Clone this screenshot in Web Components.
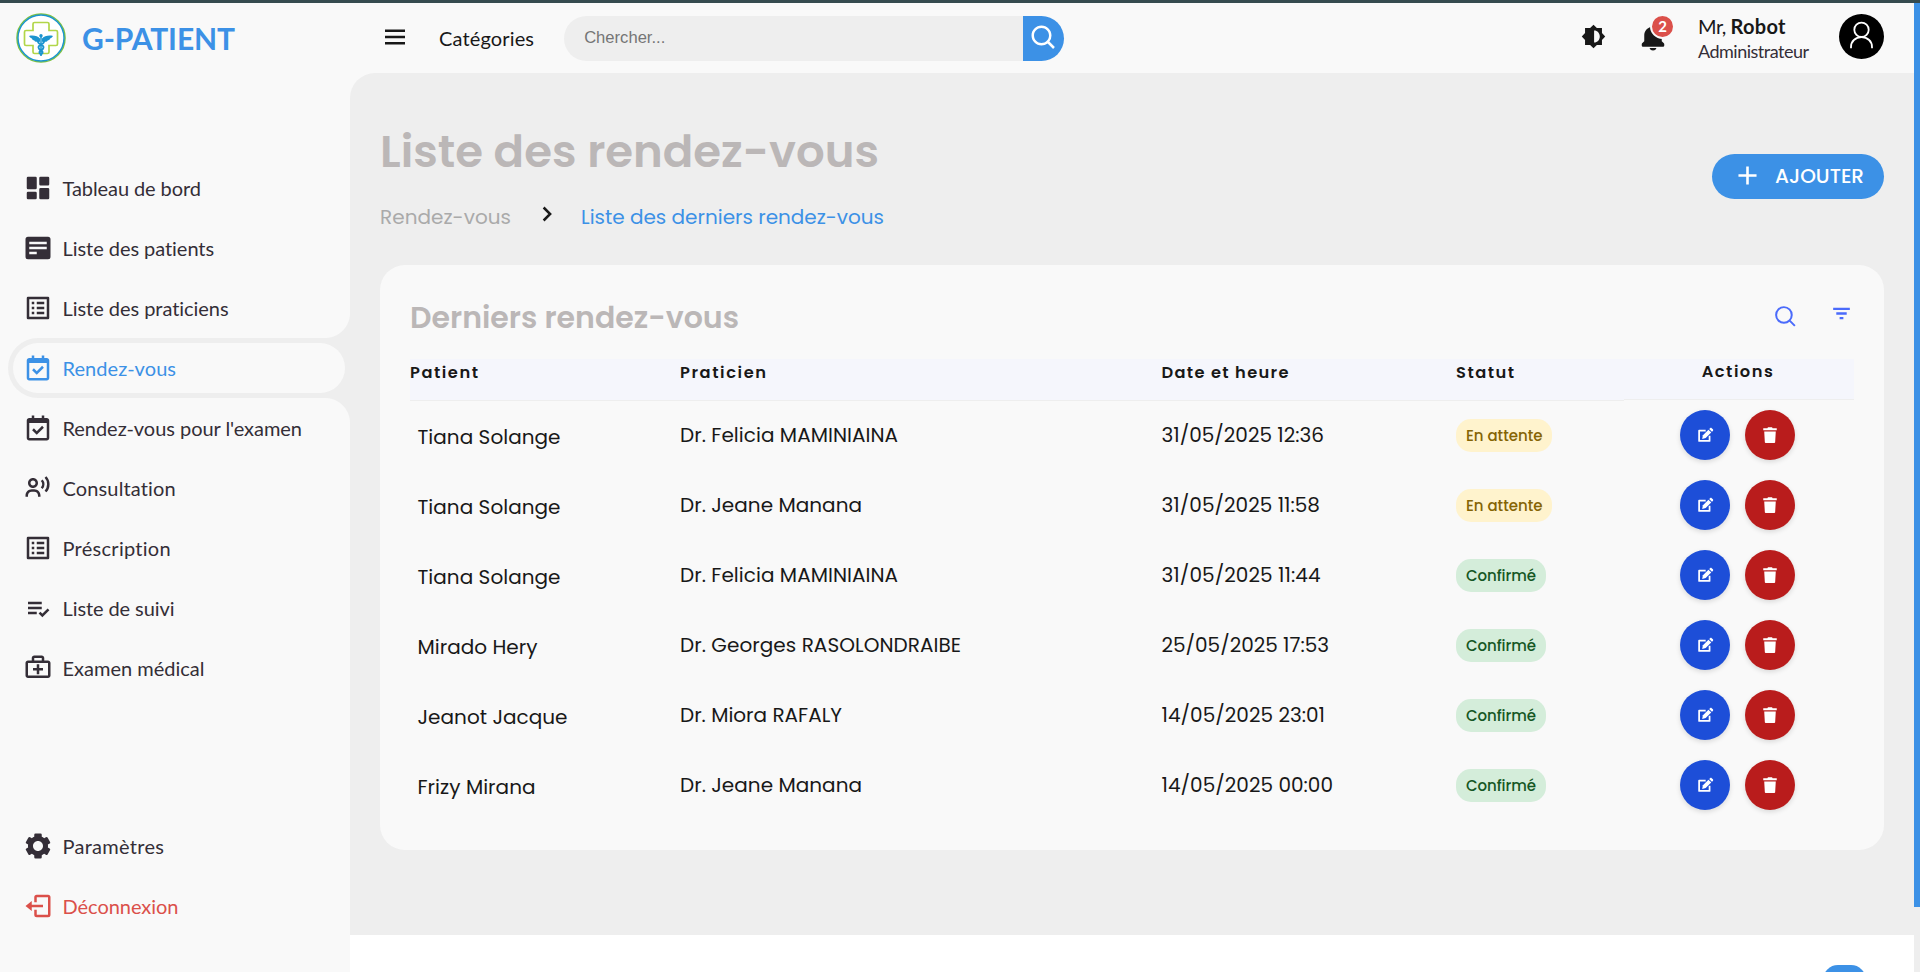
<!DOCTYPE html>
<html lang="fr">
<head>
<meta charset="utf-8">
<title>G-PATIENT</title>
<style>
html,body{margin:0;height:100%;overflow:hidden}
body{font-family:Poppins,Inter,"Open Sans",sans-serif;background:#fff;color:#181818}
</style>
</head>
<body>
<patient-app></patient-app>
<script>
const LATO = 'Lato,"Open Sans",sans-serif';
const ICONS = {
  dashboard:'<path d="M4 13h6a1 1 0 0 0 1-1V4a1 1 0 0 0-1-1H4a1 1 0 0 0-1 1v8a1 1 0 0 0 1 1zm-1 7a1 1 0 0 0 1 1h6a1 1 0 0 0 1-1v-4a1 1 0 0 0-1-1H4a1 1 0 0 0-1 1v4zm10 0a1 1 0 0 0 1 1h6a1 1 0 0 0 1-1v-7a1 1 0 0 0-1-1h-6a1 1 0 0 0-1 1v7zm1-10h6a1 1 0 0 0 1-1V4a1 1 0 0 0-1-1h-6a1 1 0 0 0-1 1v5a1 1 0 0 0 1 1z"/>',
  detail:'<path fill-rule="evenodd" d="M4 3h16a2 2 0 0 1 2 2v14a2 2 0 0 1-2 2H4a2 2 0 0 1-2-2V5a2 2 0 0 1 2-2zM5 7v2h14V7zm0 4v2h14v-2zm0 4v2h6v-2z"/>',
  list:'<path fill-rule="evenodd" d="M4 3h16a1 1 0 0 1 1 1v16a1 1 0 0 1-1 1H4a1 1 0 0 1-1-1V4a1 1 0 0 1 1-1zm1 2v14h14V5z"/><path d="M7 7h2v2H7zm4 0h6v2h-6zm-4 4h2v2H7zm4 0h6v2h-6zm-4 4h2v2H7zm4 0h6v2h-6z"/>',
  calendar:'<path fill-rule="evenodd" d="M19 4h-2V2h-2v2H9V2H7v2H5c-1.1 0-2 .9-2 2v14c0 1.1.9 2 2 2h14c1.1 0 2-.9 2-2V6c0-1.1-.9-2-2-2zm0 16H5V8h14z"/><path d="m11 17.414 5.707-5.707-1.414-1.414L11 14.586l-2.293-2.293-1.414 1.414z"/>',
  voice:'<path fill-rule="evenodd" d="M8 12c2.28 0 4-1.72 4-4s-1.72-4-4-4-4 1.72-4 4 1.72 4 4 4zm0-6c1.18 0 2 .82 2 2s-.82 2-2 2-2-.82-2-2 .82-2 2-2z"/><path d="M9 13H7c-2.757 0-5 2.243-5 5v1h2v-1c0-1.654 1.346-3 3-3h2c1.654 0 3 1.346 3 3v1h2v-1c0-2.757-2.243-5-5-5z"/><path d="M15 5.8c1.6 1.8 1.6 4.600 0 6.400M18 3.200c3 3.100 3 8.500 0 11.600" fill="none" stroke="currentColor" stroke-width="2"/>',
  check:'<path d="M4 7h11v2H4zm0 4h11v2H4zm0 4h7v2H4z"/><path d="m13.200 15.700 2.300 2.300 4.900-4.900" fill="none" stroke="currentColor" stroke-width="2"/>',
  medical:'<path fill-rule="evenodd" d="M20 6h-3V4c0-1.100-.9-2-2-2H9c-1.100 0-2 .9-2 2v2H4c-1.100 0-2 .9-2 2v10c0 1.100.9 2 2 2h16c1.100 0 2-.9 2-2V8c0-1.100-.9-2-2-2zM9 4h6v2H9zM4 8h16v10H4z"/><path d="M13 9h-2v3H8v2h3v3h2v-3h3v-2h-3z"/>',
  cog:'<path d="m2.344 15.271 2 3.460a1 1 0 0 0 1.366.365l1.396-.806c.58.457 1.221.832 1.895 1.112V21a1 1 0 0 0 1 1h4a1 1 0 0 0 1-1v-1.598a8.094 8.094 0 0 0 1.895-1.112l1.396.806c.477.275 1.091.11 1.366-.365l2-3.460a1.004 1.004 0 0 0-.365-1.366l-1.372-.793a7.683 7.683 0 0 0-.002-2.224l1.372-.793c.476-.275.641-.89.365-1.366l-2-3.460a1 1 0 0 0-1.366-.365l-1.396.806A8.034 8.034 0 0 0 15 4.598V3a1 1 0 0 0-1-1h-4a1 1 0 0 0-1 1v1.598A8.094 8.094 0 0 0 7.105 5.710L5.710 4.904a.999.999 0 0 0-1.366.365l-2 3.460a1.004 1.004 0 0 0 .365 1.366l1.372.793a7.683 7.683 0 0 0 0 2.224l-1.372.793c-.476.275-.641.89-.365 1.366zM12 8c2.206 0 4 1.794 4 4s-1.794 4-4 4-4-1.794-4-4 1.794-4 4-4z"/>',
  exit:'<path d="m2 12 5 4v-3h9v-2H7V8z"/><path d="M10 9V5a1 1 0 0 1 1-1h9a1 1 0 0 1 1 1v14a1 1 0 0 1-1 1h-9a1 1 0 0 1-1-1v-4" fill="none" stroke="currentColor" stroke-width="2"/>',
  menu:'<path d="M4 6h16v2H4zm0 5h16v2H4zm0 5h16v2H4z"/>',
  search:'<path d="M10 18a7.952 7.952 0 0 0 4.897-1.688l4.396 4.396 1.414-1.414-4.396-4.396A7.952 7.952 0 0 0 18 10c0-4.411-3.589-8-8-8s-8 3.589-8 8 3.589 8 8 8zm0-14c3.309 0 6 2.691 6 6s-2.691 6-6 6-6-2.691-6-6 2.691-6 6-6z"/>',
  searchThin:'<path d="M10.500 3a7.500 7.500 0 1 0 0 15 7.500 7.500 0 0 0 0-15zm5.500 13 5 5" fill="none" stroke="currentColor" stroke-width="1.900"/>',
  bright:'<path fill-rule="evenodd" d="M12 2.300 14.800 5H19v4.200l2.700 2.800L19 14.800V19h-4.200L12 21.700 9.200 19H5v-4.200L2.300 12 5 9.200V5h4.200zM12.500 7v10c2.800 0 4.700-2.200 4.700-5s-1.900-5-4.700-5z"/>',
  bell:'<path d="M12 22a2.980 2.980 0 0 0 2.818-2H9.182A2.980 2.980 0 0 0 12 22zm7-7.414V10c0-3.217-2.185-5.927-5.145-6.742C13.562 2.520 12.846 2 12 2s-1.562.520-1.855 1.258C7.184 4.073 5 6.783 5 10v4.586l-1.707 1.707A.996.996 0 0 0 3 17v1a1 1 0 0 0 1 1h16a1 1 0 0 0 1-1v-1a.996.996 0 0 0-.293-.707L19 14.586z"/>',
  chevron:'<path d="m9.300 6.800 5.200 5.200-5.200 5.200" fill="none" stroke="currentColor" stroke-width="2"/>',
  plus:'<path d="M19 11h-6V5h-2v6H5v2h6v6h2v-6h6z"/>',
  filter:'<path d="M4 6.500h16v2.200H4zm3 4.400h10v2.200H7zm3.200 4.400h3.600v2.200h-3.600z"/>',
  edit:'<path d="M13.500 5.800H5.200v13h13.200v-6.500" fill="none" stroke="currentColor" stroke-width="2.200" stroke-linejoin="round"/><path d="m10 11.800 7-7 3.500 3.500-7 7-4.400 1z"/><path d="m17.900 3.900 1.200-1.200c.6-.6 1.400-.6 2 0l1.500 1.500c.6.6.6 1.400 0 2l-1.200 1.200z"/>',
  trash:'<path d="M3 3h5.500l.8-1.300h5.400L15.500 3H21v2.700H3zM4.300 7.200h15.400l-.8 14c0 .9-.8 1.500-1.700 1.500H6.800c-.9 0-1.700-.6-1.700-1.500z"/>'
};

/* Inline icon on a 24-unit grid: <ui-icon name size> */
class UiIcon extends HTMLElement{
  connectedCallback(){
    const s=this.getAttribute('size')||30;
    this.attachShadow({mode:'open'}).innerHTML=
      `<style>:host{display:block;flex:none;width:${s}px;height:${s}px}svg{display:block}</style>
       <svg width="${s}" height="${s}" viewBox="0 0 24 24" fill="currentColor">${ICONS[this.getAttribute('name')]}</svg>`;
  }
}
customElements.define('ui-icon',UiIcon);

/* Single-line label tracked out (or in) to a given width: <ui-label w> */
class UiLabel extends HTMLElement{
  connectedCallback(){
    this.attachShadow({mode:'open'}).innerHTML=
      '<style>:host{display:inline-block;white-space:pre}span{display:inline-block}</style><span><slot></slot></span>';
    const w=parseFloat(this.getAttribute('w')), n=this.textContent.length;
    const span=this.shadowRoot.querySelector('span');
    if(w&&n>1) span.style.letterSpacing=((w-span.getBoundingClientRect().width)/(n-1)).toFixed(3)+'px';
  }
}
customElements.define('ui-label',UiLabel);

class BrandLogo extends HTMLElement{
  connectedCallback(){
    this.attachShadow({mode:'open'}).innerHTML=`
    <style>:host{display:flex;align-items:center;height:70px;padding-left:16px;color:#3c91e6;font:700 30px/40px ${LATO}}
    svg{flex:none;margin-right:16px}</style>
    <svg width="50" height="50" viewBox="0 0 50 50" fill="none">
      <circle cx="25" cy="25" r="24" fill="#fff" stroke="#7dc242" stroke-width="1.600"/>
      <circle cx="25" cy="25" r="23" stroke="#1b94cf" stroke-width="1.400"/>
      <path d="M18.500 9.500h13a1.500 1.500 0 0 1 1.500 1.500v6.500h7a1.500 1.500 0 0 1 1.500 1.500v12a1.500 1.500 0 0 1-1.500 1.500h-7V39a1.500 1.500 0 0 1-1.500 1.500h-13A1.500 1.500 0 0 1 17 39v-6.500h-7A1.500 1.500 0 0 1 8.500 31V19a1.500 1.500 0 0 1 1.500-1.500h7V11a1.500 1.500 0 0 1 1.500-1.500z" stroke="#b2d64a" stroke-width="1.700"/>
      <path d="M25 23v20" stroke="#1b94cf" stroke-width="1.500"/><circle cx="25" cy="22.800" r="1.700" fill="#1b94cf"/>
      <path d="M24 25.500c-2-2.500-7-3.500-11-2.500 1 1.500 2 2.300 3 2.500 0 1 1 1.800 2.200 1.800.3 1.200 1.600 1.800 3 1.400 1 .8 2.200.5 2.800-.3zm2 0c2-2.500 7-3.500 11-2.500-1 1.500-2 2.300-3 2.500 0 1-1 1.800-2.200 1.800-.3 1.200-1.600 1.800-3 1.400-1 .8-2.200.5-2.800-.3z" fill="#1b94cf"/>
      <path d="M22 27c-1.500 5 6 4 5.500 7.500s-5 2.500-4 5.500l2 2M28 27c1.500 5-6 4-5.500 7.500s5 2.500 4 5.500l-2 2" stroke="#1b94cf" stroke-width="1.800"/>
    </svg><ui-label w="153">G-PATIENT</ui-label>`;
  }
}
customElements.define('brand-logo',BrandLogo);

/* One entry of the side menu; the "active" attribute gives the notched pill */
class SideItem extends HTMLElement{
  connectedCallback(){
    this.attachShadow({mode:'open'}).innerHTML=`
    <style>
    :host{display:block;position:relative;height:60px;box-sizing:border-box;margin-left:8px;padding:5px;color:#342e37;font:400 20px/50px ${LATO}}
    a{display:flex;align-items:center;height:50px;border-radius:25px;padding-left:9.500px}
    ui-icon{margin-right:10px}
    :host([active]){background:#eee;color:#3c91e6;border-radius:30px 0 0 30px}
    :host([active]) a{background:#f9f9f9}
    :host([active])::before,:host([active])::after{content:"";position:absolute;right:0;width:25px;height:25px}
    :host([active])::before{top:-25px;background:radial-gradient(circle at 0 0,transparent 24.500px,#eee 25.500px)}
    :host([active])::after{bottom:-25px;background:radial-gradient(circle at 0 100%,transparent 24.500px,#eee 25.500px)}
    :host([danger]){color:#db504a}
    </style>
    <a><ui-icon name="${this.getAttribute('icon')}"></ui-icon><ui-label w="${this.getAttribute('w')}">${this.getAttribute('label')}</ui-label></a>`;
  }
}
customElements.define('side-item',SideItem);

class SideBar extends HTMLElement{
  connectedCallback(){
    const it=(icon,label,w,x='')=>`<side-item icon="${icon}" label="${label}" w="${w}" ${x}></side-item>`;
    this.attachShadow({mode:'open'}).innerHTML=`
    <style>:host{display:flex;flex-direction:column;width:350px;flex:none;background:#f9f9f9}
    nav{margin-top:85px}nav+nav{margin-top:118px}</style>
    <brand-logo></brand-logo>
    <nav>${it('dashboard','Tableau de bord',138.5)}${it('detail','Liste des patients',152)}${it('list','Liste des praticiens',166.5)}${it('calendar','Rendez-vous',113.5,'active')}${it('calendar',"Rendez-vous pour l'examen",239.5)}${it('voice','Consultation',113.5)}${it('list','Préscription',108.5)}${it('check','Liste de suivi',112)}${it('medical','Examen médical',142)}</nav>
    <nav>${it('cog','Paramètres',101.5)}${it('exit','Déconnexion',116,'danger')}</nav>`;
  }
}
customElements.define('side-bar',SideBar);

class TopNav extends HTMLElement{
  connectedCallback(){
    this.attachShadow({mode:'open'}).innerHTML=`
    <style>
    :host{display:flex;align-items:center;height:70px;flex:none;background:#f9f9f9;padding:0 30px 0 29.500px;font-family:${LATO};color:#181818}
    .cat{margin-left:29.500px;font-size:20px;line-height:30px;margin-top:0}
    form{display:flex;width:500px;height:45px;margin-left:30px;margin-top:1px}
    input{flex:1;min-width:0;box-sizing:border-box;border:0;margin:0;padding:0 20px 2px;border-radius:22.500px 0 0 22.500px;background:#eee;font:16.600px "Liberation Sans",Arial,sans-serif}
    input::placeholder{color:#757575;opacity:1}
    button{width:41px;border:0;padding:0 0 1px 5.500px;background:#3c91e6;color:#fff;border-radius:0 22.500px 22.500px 0}
    .sp{flex:1}
    .bell{position:relative;margin-left:30px}
    .badge{position:absolute;left:12px;top:-9px;width:21px;height:21px;border:2px solid #f9f9f9;border-radius:50%;background:#db504a;color:#fff;font-weight:700;font-size:15px;line-height:21px;text-align:center}
    .who{display:flex;flex-direction:column;align-items:flex-start;width:141px;margin-left:30px;margin-top:-1px}
    .n{font-size:20px;line-height:26px;display:flex}
    .r{font-size:18px;line-height:24px;color:#342e37}
    .av{display:block;flex:none;margin-top:-3px}
    </style>
    <ui-icon name="menu" style="margin-top:-2px"></ui-icon>
    <ui-label class="cat" w="95">Catégories</ui-label>
    <form><input placeholder="Chercher..." aria-label="Chercher"><button type="button"><ui-icon name="search"></ui-icon></button></form>
    <div class="sp"></div>
    <ui-icon name="bright" size="29" style="margin-top:-3px"></ui-icon>
    <div class="bell"><ui-icon name="bell" size="30"></ui-icon><div class="badge">2</div></div>
    <div class="who"><div class="n"><ui-label w="33">Mr, </ui-label><ui-label w="55" style="font-weight:700">Robot</ui-label></div><ui-label class="r" w="111">Administrateur</ui-label></div>
    <svg class="av" width="45" height="45" viewBox="0 0 45 45"><circle cx="22.500" cy="22.500" r="22.500"/><g fill="none" stroke="#fff" stroke-width="1.800"><circle cx="22.500" cy="15.800" r="7.200"/><path d="M12 34.300v-1.400c0-5.400 4.200-9.700 10.500-9.700S33 27.500 33 32.900v1.400"/></g></svg>`;
  }
}
customElements.define('top-nav',TopNav);

class PageHead extends HTMLElement{
  connectedCallback(){
    this.attachShadow({mode:'open'}).innerHTML=`
    <style>
    :host{display:flex;justify-content:space-between;align-items:center;height:110px}
    h1{margin:0 0 21px;font-size:45px;font-weight:600;line-height:58px;color:#bbb7b7}
    .bc{display:flex;align-items:center;font-size:20px;line-height:30px;color:#aaa}
    ui-icon{margin:-6px 19px 0 21px;color:#181818}
    .cur{color:#3c91e6}
    button{display:flex;align-items:center;box-sizing:border-box;width:172px;height:45px;border:0;border-radius:22.500px;background:#3c91e6;color:#fff;padding:0 0 0 20px;margin-top:-2px;font:500 20px/30px Poppins,Inter,sans-serif}
    button ui-icon{color:#fff;margin:-1px 12px 0 0}
    </style>
    <div><h1><ui-label w="499">Liste des rendez-vous</ui-label></h1>
    <div class="bc"><ui-label w="131">Rendez-vous</ui-label><ui-icon name="chevron" size="30"></ui-icon><ui-label class="cur" w="303">Liste des derniers rendez-vous</ui-label></div></div>
    <button><ui-icon name="plus" size="31"></ui-icon><ui-label w="89">AJOUTER</ui-label></button>`;
  }
}
customElements.define('page-head',PageHead);

class StatusPill extends HTMLElement{
  connectedCallback(){
    const ok=this.hasAttribute('ok');
    this.attachShadow({mode:'open'}).innerHTML=`
    <style>:host{display:block;box-sizing:border-box;width:${ok?90:96}px;height:33px;margin-top:1px;padding-left:10px;border-radius:15px;font-size:15px;font-weight:500;line-height:34px;background:${ok?'#d4edda':'#fff3cd'};color:${ok?'#155724':'#856404'}}</style>
    <ui-label w="${ok?70:76.5}">${ok?'Confirmé':'En attente'}</ui-label>`;
  }
}
customElements.define('status-pill',StatusPill);

class RoundAction extends HTMLElement{
  connectedCallback(){
    const ed=this.getAttribute('kind')==='edit';
    this.attachShadow({mode:'open'}).innerHTML=`
    <style>:host{display:flex;align-items:center;justify-content:center;box-sizing:border-box;width:50px;height:50px;border-radius:50%;color:#fff;padding-right:${ed?2:0}px;background:${ed?'#1d4ed8':'#b91c1c'};box-shadow:0 2px 5px rgba(0,0,0,.13)}</style>
    <ui-icon name="${ed?'edit':'trash'}" size="${ed?19:18}"></ui-icon>`;
  }
}
customElements.define('round-action',RoundAction);

class AppointmentCard extends HTMLElement{
  connectedCallback(){
    const rows=[
      ['Tiana Solange',143,'Dr. Felicia MAMINIAINA',218,'31/05/2025 12:36',162.5,0],
      ['Tiana Solange',143,'Dr. Jeane Manana',182,'31/05/2025 11:58',158.5,0],
      ['Tiana Solange',143,'Dr. Felicia MAMINIAINA',218,'31/05/2025 11:44',159,1],
      ['Mirado Hery',120,'Dr. Georges RASOLONDRAIBE',281,'25/05/2025 17:53',167.5,1],
      ['Jeanot Jacque',150,'Dr. Miora RAFALY',162,'14/05/2025 23:01',163.5,1],
      ['Frizy Mirana',118,'Dr. Jeane Manana',182,'14/05/2025 00:00',171.5,1]];
    this.attachShadow({mode:'open'}).innerHTML=`
    <style>
    :host{display:block;box-sizing:border-box;height:585px;margin-top:33px;padding:30px;border-radius:25px;background:#f9f9f9}
    header{display:flex;align-items:center;height:46px;margin-bottom:18px;color:#4b6bfb}
    h2{flex:1;margin:0;font-size:30px;font-weight:600;line-height:40px;color:#bbb7b7}
    .row{display:grid;grid-template-columns:270px 481.500px 294.500px 168px 230px;align-items:center;height:70px;font-size:20px;line-height:30px;color:#181818}
    .row>ui-label{margin-top:0}.row>.p{padding-left:7.500px;margin-top:3px}
    .head{height:41px;align-items:start;font-size:16.250px;font-weight:600;line-height:25px}
    .head div{box-sizing:border-box;height:42px;padding-top:1px;background:#f5f6fc;border-bottom:1px solid #eee}
    .head div:last-child{height:41px;padding:0 2px 0 0;text-align:center}
    .act{display:flex;gap:15px;padding-left:56px}
    </style>
    <header><h2><ui-label w="329">Derniers rendez-vous</ui-label></h2><ui-icon name="searchThin" size="25" style="margin:-3px 31.500px 0 0"></ui-icon><ui-icon name="filter" size="25" style="margin:-9px 0 0 0"></ui-icon></header>
    <div class="row head"><div><ui-label w="68">Patient</ui-label></div><div><ui-label w="86">Praticien</ui-label></div><div><ui-label w="127">Date et heure</ui-label></div><div><ui-label w="58">Statut</ui-label></div><div><ui-label w="71">Actions</ui-label></div></div>
    ${rows.map(r=>`<div class="row"><ui-label class="p" w="${r[1]}">${r[0]}</ui-label><ui-label w="${r[3]}">${r[2]}</ui-label><ui-label w="${r[5]}">${r[4]}</ui-label><status-pill ${r[6]?'ok':''}></status-pill><div class="act"><round-action kind="edit"></round-action><round-action kind="trash"></round-action></div></div>`).join('')}`;
  }
}
customElements.define('appointment-card',AppointmentCard);

class PatientApp extends HTMLElement{
  connectedCallback(){
    this.attachShadow({mode:'open'}).innerHTML=`
    <style>
    :host{display:flex;box-sizing:border-box;height:100vh;border-top:3px solid #364b4f;position:relative;overflow:hidden}
    .main{flex:1;display:flex;flex-direction:column;background:#fff}
    .wrap{background:#f9f9f9;flex:none}
    main{box-sizing:border-box;height:862px;padding:49px 30px 0;background:#eee;border-radius:25px 0 0 0}
    .bar{width:6px;flex:none;background:#eee}.bar div{height:904px;background:#3c91e6}
    .fab{position:absolute;right:54px;top:962px;width:43px;height:43px;border-radius:15px;background:#3c91e6}
    </style>
    <side-bar></side-bar>
    <div class="main"><top-nav></top-nav><div class="wrap"><main><page-head></page-head><appointment-card></appointment-card></main></div></div>
    <div class="bar"><div></div></div>
    <div class="fab"></div>`;
  }
}
customElements.define('patient-app',PatientApp);
</script>
</body>
</html>
